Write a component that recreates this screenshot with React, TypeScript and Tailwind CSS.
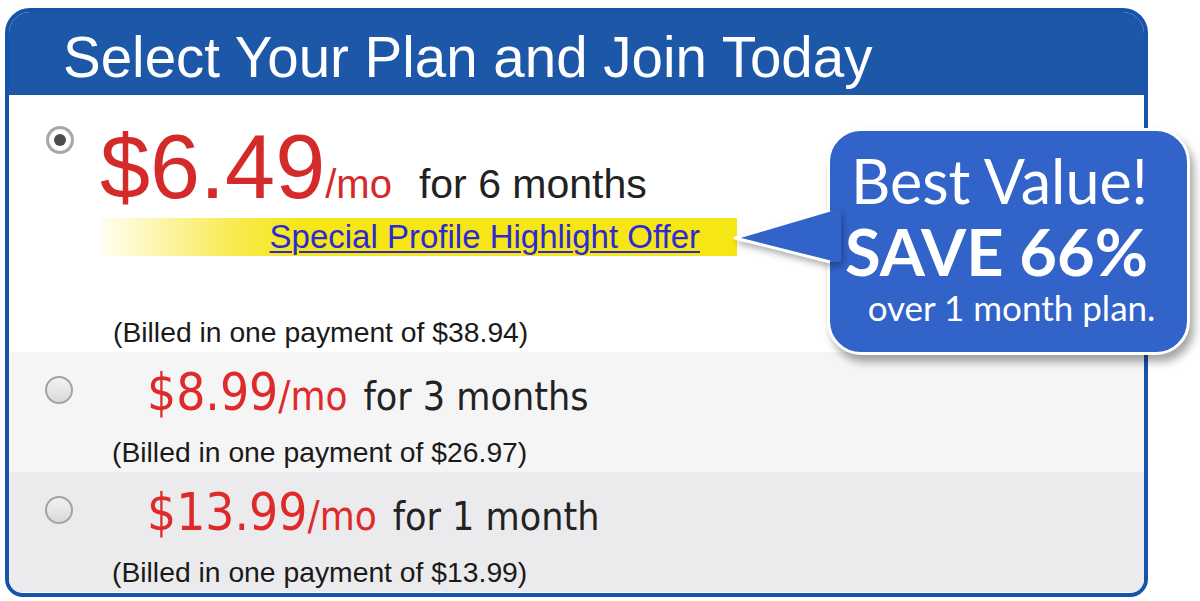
import React from "react";

type Plan = {
  price: string;
  term: string;
  billed: string;
  bg: string;
};

const otherPlans: Plan[] = [
  { price: "$8.99", term: "for 3 months", billed: "(Billed in one payment of $26.97)", bg: "bg-[#f5f5f5]" },
  { price: "$13.99", term: "for 1 month", billed: "(Billed in one payment of $13.99)", bg: "bg-[#ebebed]" },
];

function Radio({ checked }: { checked?: boolean }) {
  if (checked) {
    return (
      <div className="flex h-[28px] w-[28px] items-center justify-center rounded-full border-[3px] border-[#a8a8a8] bg-[radial-gradient(circle,#ffffff_55%,#e2e2e2_100%)]">
        <div className="h-[12px] w-[12px] rounded-full bg-[#4d4d4d]" />
      </div>
    );
  }
  return (
    <div className="h-[28px] w-[28px] rounded-full border-2 border-[#a3a3a3] bg-[linear-gradient(180deg,#f2f2f2_0%,#d9d9d9_100%)]" />
  );
}

function Bubble() {
  return (
    <div className="absolute left-[827px] top-[128px] h-[227px] w-[363px] rounded-[34px] border-[3px] border-white bg-[#3263c9] shadow-[4px_7px_9px_rgba(0,0,0,0.35)]">
      <svg
        className="absolute left-[-99px] top-[67px] drop-shadow-[2px_4px_3px_rgba(0,0,0,0.3)]"
        width="112"
        height="80"
        viewBox="0 0 112 80"
      >
        <polygon points="4,40 99,12 110,12 110,64 99,64" fill="#3263c9" />
        <polyline
          points="99,12 4,40 99,64"
          fill="none"
          stroke="#ffffff"
          strokeWidth="3"
          strokeLinejoin="round"
        />
      </svg>
      <div className="flex flex-col items-center pt-[19px] font-['Lato',sans-serif] text-white">
        <div className="mr-[18px] text-[61px] leading-[61px]">Best Value!</div>
        <div className="mr-[24px] mt-[8px] text-[65px] font-bold leading-[65px]">SAVE 66%</div>
        <div className="ml-[6px] mt-[6px] text-[35px] leading-[35px]">over 1 month plan.</div>
      </div>
    </div>
  );
}

export default function App() {
  return (
    <div className="relative h-[601px] w-[1200px] overflow-hidden bg-white pl-[5px] pt-[8px] font-['Liberation_Sans',Arial,sans-serif]">
      <div className="h-[589px] w-[1143px] overflow-hidden rounded-t-[25px] rounded-b-[18px] border-4 border-[#1553ac] bg-white">
        <div className="h-[83px] bg-[#1d58a8] pl-[54px] pt-[18px] text-[56.5px] leading-[56px] text-white">
          Select Your Plan and Join Today
        </div>

        <div className="flex h-[257px] items-start bg-white">
          <div className="ml-[37px] mt-[31px]">
            <Radio checked />
          </div>
          <div className="ml-[26px] flex flex-col pt-[27px]">
            <div className="flex items-baseline whitespace-nowrap text-[#d42a2a]">
              <span className="text-[90px] leading-[90px]">$6.49</span>
              <span className="text-[40px] leading-[40px]">/mo</span>
              <span className="ml-[27px] text-[41px] leading-[40px] text-[#222]">for 6 months</span>
            </div>
            <div className="mt-[6px] flex h-[38px] w-[637px] items-center justify-end bg-[linear-gradient(90deg,#fffef4_0%,#f8ea4a_22%,#f6e614_32%,#f6e614_100%)] pr-[37px]">
              <a href="#" className="text-[33px] leading-[38px] text-[#2b2bd6] underline decoration-2 underline-offset-[3px]">
                Special Profile Highlight Offer
              </a>
            </div>
            <div className="ml-[13px] mt-[62px] whitespace-nowrap text-[28.3px] leading-[28px] text-[#1a1a1a]">
              (Billed in one payment of $38.94)
            </div>
          </div>
        </div>

        {otherPlans.map((plan) => (
          <div key={plan.price} className={`flex h-[120px] items-start ${plan.bg}`}>
            <div className="ml-[36px] mt-[24px]">
              <Radio />
            </div>
            <div className="ml-[39px] flex flex-col pt-[15px]">
              <div className="ml-[35px] flex items-baseline whitespace-nowrap font-['DejaVu_Sans_Condensed','DejaVu_Sans',sans-serif] text-[#de2a2a]">
                <span className="text-[51px] leading-[51px]">{plan.price}</span>
                <span className="text-[40px] leading-[39px]">/mo</span>
                <span className="ml-[16px] text-[39px] leading-[39px] text-[#222]">{plan.term}</span>
              </div>
              <div className="mt-[20px] whitespace-nowrap text-[28.3px] leading-[28px] text-[#1a1a1a]">
                {plan.billed}
              </div>
            </div>
          </div>
        ))}
      </div>

      <Bubble />
    </div>
  );
}
